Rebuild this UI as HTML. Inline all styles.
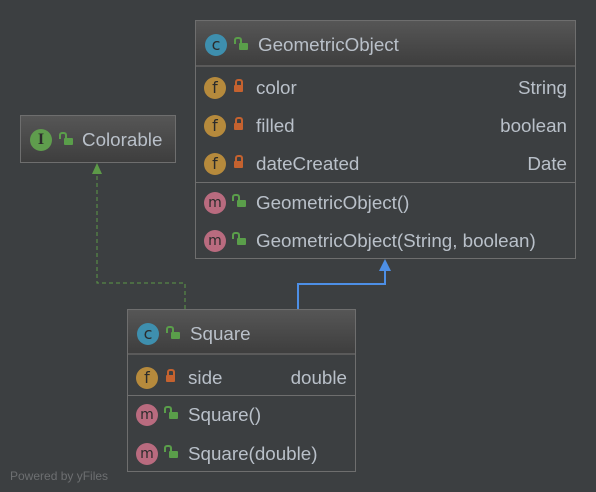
<!DOCTYPE html>
<html><head><style>
body{margin:0;width:596px;height:492px;background:#3c3f41;position:relative;overflow:hidden;font-family:"Liberation Sans",sans-serif;font-size:18.8px;color:#b9c0c9}
.box{position:absolute;border:1px solid #6e6e6e;box-sizing:border-box;background:#3c3f41}
.hd{position:absolute;left:0;right:0;top:0;background:linear-gradient(#565656,#3e3e3e);border-bottom:2px solid #5a5a5a}
.hl{position:absolute;left:0;right:0;height:1px;background:#6e6e6e}
.t{position:absolute;white-space:nowrap;line-height:20px}
.ic{position:absolute;width:22px;height:22px;margin-top:-1px;border-radius:50%;font-size:16px;line-height:22px;text-align:center;color:#2b2b2b;font-family:"DejaVu Sans",sans-serif}
.c{background:#3e8fae}.f{background:#b68a3c}.m{background:#b96b7f;font-size:14px}.i{background:#5f9d4d;font-family:"Liberation Serif",serif;font-weight:bold}
.lk{position:absolute;width:9px;height:7px;border-radius:1px}
.lk:before{content:"";position:absolute;width:4px;height:5px;border:2px solid;border-bottom:none;border-radius:3px 3px 0 0;top:-6px}
.pub{background:#5a9e4a;color:#5a9e4a}.pub:before{left:-5px}
.pri{background:#c5622f;color:#c5622f}.pri:before{left:0.5px}
</style></head><body>
<svg width="596" height="492" style="position:absolute;left:0;top:0">
<path d="M185 309V283H97V172" stroke="#5d9a48" stroke-width="1" stroke-dasharray="4,3" fill="none"/>
<polygon points="97,163 92,174 102,174" fill="#5d9a48"/>
<path d="M298 309V284H385V270" stroke="#4d8fe6" stroke-width="2" fill="none"/>
<polygon points="385,259 379,271 391,271" fill="#4d8fe6"/>
</svg>

<div class="box" style="left:20px;top:115px;width:156px;height:48px">
<div class="hd" style="height:46px;border-bottom:none"></div>
<div class="ic i" style="left:9px;top:14px">I</div>
<div class="lk pub" style="left:43px;top:22px"></div>
<div class="t" style="left:61px;top:14px">Colorable</div>
</div>

<div class="box" style="left:195px;top:20px;width:381px;height:239px">
<div class="hd" style="height:44px"></div>
<div class="ic c" style="left:9px;top:14px">c</div>
<div class="lk pub" style="left:43px;top:22px"></div>
<div class="t" style="left:62px;top:14px">GeometricObject</div>
<div class="ic f" style="left:8px;top:57px">f</div><div class="lk pri" style="left:38px;top:64px"></div><div class="t" style="left:60px;top:57px">color</div><div class="t" style="right:8px;top:57px">String</div>
<div class="ic f" style="left:8px;top:95px">f</div><div class="lk pri" style="left:38px;top:102px"></div><div class="t" style="left:60px;top:95px">filled</div><div class="t" style="right:8px;top:95px">boolean</div>
<div class="ic f" style="left:8px;top:133px">f</div><div class="lk pri" style="left:38px;top:140px"></div><div class="t" style="left:60px;top:133px">dateCreated</div><div class="t" style="right:8px;top:133px">Date</div>
<div class="hl" style="top:161px"></div>
<div class="ic m" style="left:8px;top:172px">m</div><div class="lk pub" style="left:41px;top:179px"></div><div class="t" style="left:60px;top:172px">GeometricObject()</div>
<div class="ic m" style="left:8px;top:210px">m</div><div class="lk pub" style="left:41px;top:217px"></div><div class="t" style="left:60px;top:210px">GeometricObject(String, boolean)</div>
</div>

<div class="box" style="left:127px;top:309px;width:229px;height:163px">
<div class="hd" style="height:43px"></div>
<div class="ic c" style="left:9px;top:14px">c</div>
<div class="lk pub" style="left:43px;top:22px"></div>
<div class="t" style="left:62px;top:14px">Square</div>
<div class="ic f" style="left:8px;top:58px">f</div><div class="lk pri" style="left:38px;top:65px"></div><div class="t" style="left:60px;top:58px">side</div><div class="t" style="right:8px;top:58px">double</div>
<div class="hl" style="top:85px"></div>
<div class="ic m" style="left:8px;top:95px">m</div><div class="lk pub" style="left:41px;top:102px"></div><div class="t" style="left:60px;top:95px">Square()</div>
<div class="ic m" style="left:8px;top:134px">m</div><div class="lk pub" style="left:41px;top:141px"></div><div class="t" style="left:60px;top:134px">Square(double)</div>
</div>

<div class="t" style="left:10px;top:466px;font-size:12px;color:#6d6f71">Powered by yFiles</div>
</body></html>
